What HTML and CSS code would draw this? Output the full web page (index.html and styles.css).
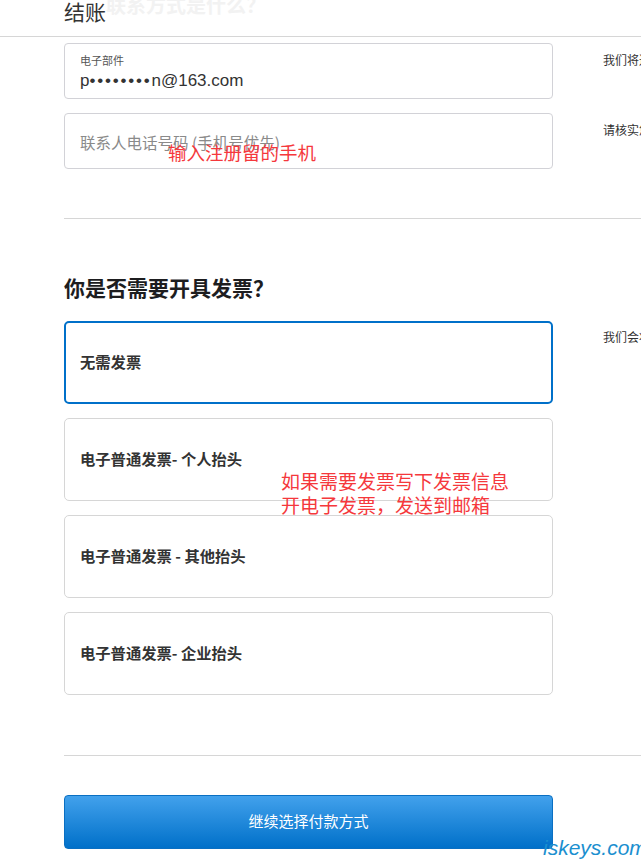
FILE: index.html
```
<!DOCTYPE html>
<html lang="zh-CN">
<head>
<meta charset="utf-8">
<title>结账</title>
<link rel="stylesheet" href="styles.css">
</head>
<body>
<header class="topbar">
  <span class="title">结账</span>
  <span class="ghost">联系方式是什么？</span>
</header>
<main class="page">
  <section class="contact">
    <div class="row">
      <div class="field field-filled">
        <span class="field-label">电子部件</span>
        <span class="field-value">p<span class="mask">••••••••</span>n@163.com</span>
      </div>
      <p class="note">我们将通过电子邮件发送订单确认</p>
    </div>
    <div class="row">
      <div class="field field-empty">
        <span class="placeholder">联系人电话号码 (手机号优先)</span>
      </div>
      <p class="note">请核实您的电话号码</p>
    </div>
  </section>
  <hr class="divider">
  <section class="invoice">
    <h2 class="heading">你是否需要开具发票？</h2>
    <div class="row">
      <div class="options">
        <div class="option selected">无需发票</div>
        <div class="option">电子普通发票- 个人抬头</div>
        <div class="option">电子普通发票 - 其他抬头</div>
        <div class="option">电子普通发票- 企业抬头</div>
      </div>
      <p class="note note-card">我们会将发票发送到您的邮箱</p>
    </div>
  </section>
  <hr class="divider divider-bottom">
  <button class="continue" type="button">继续选择付款方式</button>
</main>
<div class="annot annot-phone">输入注册留的手机</div>
<div class="annot annot-invoice">如果需要发票写下发票信息<br>开电子发票，发送到邮箱</div>
<div class="watermark">iskeys.com</div>
</body>
</html>
```
FILE: styles.css
```
html, body {
  margin: 0;
  padding: 0;
  overflow: hidden;
  background: #fff;
}
body {
  font-family: "Liberation Sans", "Noto Sans CJK SC", sans-serif;
  color: #333;
  width: 641px;
  height: 860px;
  position: relative;
}
.topbar {
  height: 36px;
  border-bottom: 1px solid #d6d6d6;
  display: flex;
  align-items: flex-start;
  padding-left: 64px;
  box-sizing: content-box;
  font-family: "Noto Sans CJK SC", sans-serif;
}
.title {
  font-size: 21px;
  line-height: 22px;
  color: #333;
  font-weight: 400;
}
.ghost {
  font-size: 20px;
  line-height: 16px;
  font-weight: 700;
  color: #f2f2f2;
  margin-top: -3px;
}
.page {
  padding: 6px 0 0 64px;
}
.row {
  display: grid;
  grid-template-columns: 489px 1fr;
  column-gap: 50px;
}
.contact {
  display: flex;
  flex-direction: column;
  gap: 14px;
}
.note {
  margin: 0;
  padding-top: 10px;
  font-family: "Noto Sans CJK SC", sans-serif;
  font-size: 12px;
  line-height: 14px;
  color: #333;
  white-space: nowrap;
  overflow: hidden;
}
.note-card {
  padding-top: 9px;
}
.field {
  height: 56px;
  box-sizing: border-box;
  border: 1px solid #d2d2d7;
  border-radius: 4px;
  padding: 0 15px;
}
.field-filled {
  display: flex;
  flex-direction: column;
  padding-top: 9px;
}
.field-label {
  font-family: "Noto Sans CJK SC", sans-serif;
  font-size: 11px;
  line-height: 14px;
  color: #555;
}
.field-value {
  font-size: 17px;
  line-height: 22px;
  margin-top: 3px;
  color: #333;
}
.mask {
  letter-spacing: 1.8px;
}
.field-empty {
  display: flex;
  align-items: center;
  padding-top: 2px;
}
.placeholder {
  font-family: "Noto Sans CJK SC", sans-serif;
  font-size: 15.5px;
  color: #8a8a8a;
}
.divider {
  border: 0;
  border-top: 1px solid #d6d6d6;
  margin: 49px 0 0 0;
  height: 0;
}
.heading {
  margin: 54px 0 20px 0;
  font-family: "Noto Sans CJK SC", sans-serif;
  font-size: 21px;
  line-height: 28px;
  font-weight: 700;
  color: #1d1d1f;
}
.options {
  display: flex;
  flex-direction: column;
  gap: 14px;
}
.option {
  height: 83px;
  box-sizing: border-box;
  border: 1px solid #d6d6d6;
  border-radius: 5px;
  padding: 0 15px 3px;
  display: flex;
  align-items: center;
  font-family: "Noto Sans CJK SC", sans-serif;
  font-size: 15.3px;
  font-weight: 700;
  color: #333;
}
.option.selected {
  border: 2px solid #0070c9;
  padding: 0 14px 3px;
}
.divider-bottom {
  margin-top: 60px;
}
.continue {
  display: block;
  margin-top: 39px;
  width: 489px;
  height: 54px;
  border: 1px solid #0a6fc2;
  border-radius: 4px;
  background: linear-gradient(#42a1ec, #0070c9);
  color: #fff;
  font-family: "Noto Sans CJK SC", sans-serif;
  font-size: 15px;
  padding: 0 0 4px;
  cursor: pointer;
}
.annot {
  position: absolute;
  font-family: "Noto Sans CJK SC", sans-serif;
  font-size: 19px;
  line-height: 24px;
  color: #f5383c;
}
.annot-phone {
  left: 168px;
  top: 140px;
  font-size: 18.5px;
}
.annot-invoice {
  left: 281px;
  top: 469px;
}
.watermark {
  position: absolute;
  left: 543px;
  top: 836px;
  font-family: "Liberation Sans", sans-serif;
  font-style: italic;
  font-size: 21px;
  line-height: 24px;
  color: #1b8fcf;
}
```
